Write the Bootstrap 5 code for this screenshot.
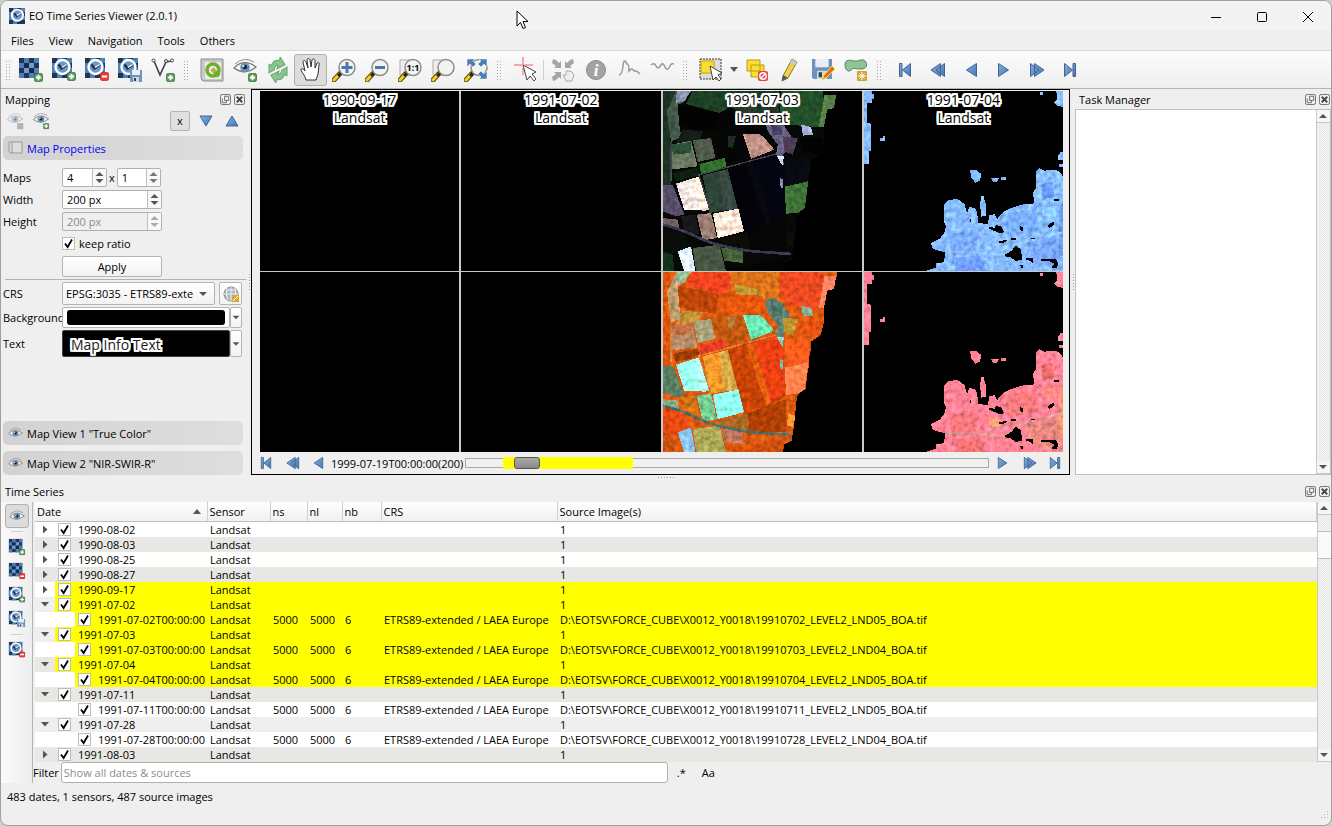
<!DOCTYPE html>
<html lang="en">
<head>
<meta charset="utf-8">
<meta name="viewport" content="width=device-width, initial-scale=1">
<title>EO Time Series Viewer (2.0.1)</title>
<link rel="stylesheet" href="https://cdn.jsdelivr.net/npm/bootstrap@5.3.0/dist/css/bootstrap.min.css">
<style>
  body { font: 11px/15px "Open Sans", "Noto Sans", sans-serif; color: #000; background: #cfcfcf; }
  button, input, select { font: inherit; color: inherit; }
  .app-window { min-height: 100vh; background: #efefef; border: 1px solid #a0a0a0; border-radius: 8px; overflow: hidden; }
  .title-bar { height: 29px; background: #f3f3f3; font-size: 11px; }
  .title-bar button { width: 46px; height: 29px; border: 0; background: none; padding: 0; }
  .menu-bar { height: 20px; gap: 15px; padding: 0 10px; }
  .menu-bar a { color: #000; text-decoration: none; }
  .tool-bar { min-height: 39px; padding-left: 0; border-top: 1px solid #dadada; border-bottom: 1px solid #b4b4b4; background: linear-gradient(#fbfbfb, #efefef); }
  .tool-bar button { width: 33px; height: 32px; border: 1px solid transparent; background: none; padding: 0; border-radius: 3px; }
  .tool-bar button.caret-btn { width: 13px; }
  .tool-bar svg, .side-tools svg { display: block; margin: auto; }
  .tool-bar .is-down, .side-tools .is-down { background: #dcdcdc; border-color: #b0b0b0; }
  .grip { width: 16px; height: 22px; flex: none; background: repeating-linear-gradient(#f5f5f5 0 2px, transparent 2px 3px), linear-gradient(90deg, transparent 5px, #a8a8a8 5px 6px, transparent 6px 8px, #a8a8a8 8px 9px, transparent 9px); }
  .grip:first-child { width: 13px; }
  .tool-sep { width: 1px; height: 20px; background: #d0d0d0; margin: 0 2px; }
  .dock-title { height: 20px; }
  .dock-title button { border: 0; background: none; padding: 0; width: 14px; height: 14px; line-height: 0; }
  .series-title { height: 22px; }
  .map-dock { width: 245px; }
  .task-dock { width: 256px; }
  .dots-v { width: 5px; display: flex; align-items: center; }
  .dots-v::before { content: ""; width: 1px; height: 17px; margin-left: 3px; background: repeating-linear-gradient(#999 0 1px, transparent 1px 3px); }
  .dots-h { height: 5px; display: flex; justify-content: center; align-items: center; }
  .dots-h::before { content: ""; width: 17px; height: 1px; background: repeating-linear-gradient(90deg, #999 0 1px, transparent 1px 3px); }
  .mini-row { gap: 6px; padding: 2px 4px 1px 0; }
  .mini { border: 1px solid transparent; background: none; padding: 0; width: 20px; height: 20px; border-radius: 2px; line-height: 0; }
  .mini.is-x { background: #e0e0e0; border-color: #b4b4b4; line-height: 18px; }
  .pull { margin-left: -2px; }
  .fold { height: 24px; background: linear-gradient(90deg, #d2d2d2, #dedede); border: 0; border-radius: 5px; width: 240px; text-align: left; padding: 0 5px; gap: 4px; }
  .fold-blue { color: #0000f5; }
  .form-rows { display: grid; grid-template-columns: 59px 1fr; row-gap: 3px; align-items: center; white-space: nowrap; }
  .form-rows.tight { row-gap: 2px; }
  .keep-row { height: 19px; }
  .thin-rule { margin: 2px 0; }
  .spin { display: flex; height: 19px; border: 1px solid #b0b0b0; border-radius: 2px; background: #fff; overflow: hidden; }
  .spin input { border: 0; outline: 0; background: none; min-width: 0; flex: 1; padding: 0 4px; height: 17px; appearance: textfield; -moz-appearance: textfield; }
  .spin input::-webkit-inner-spin-button { display: none; appearance: none; }
  .spin svg { flex: none; border-left: 1px solid #c0c0c0; background: #f8f8f8; }
  .spin.off { background: #efefef; color: #8b8b8b; }
  .w-spin-a { width: 45px; } .w-spin-b { width: 44px; } .w-spin { width: 100px; }
  .spin-pair { gap: 2px; }
  .plain-btn { border: 1px solid #b4b4b4; border-radius: 2px; background: linear-gradient(#fff, #f2f2f2); padding: 0; height: 21px; }
  .tick { appearance: none; -webkit-appearance: none; width: 13px; height: 13px; margin: 0; border: 1px solid #bcbcbc; flex: none; background: #fff url("data:image/svg+xml,%3Csvg xmlns='http://www.w3.org/2000/svg' viewBox='0 0 11 11'%3E%3Cpath d='M2 5.5 4.6 9 9 1.5' fill='none' stroke='%23000' stroke-width='1.8'/%3E%3C/svg%3E") center / 11px no-repeat; }
  .crs-select { appearance: none; -webkit-appearance: none; width: 153px; height: 23px; border: 1px solid #b4b4b4; border-radius: 2px; padding: 0 20px 0 3px; background: url("data:image/svg+xml,%3Csvg xmlns='http://www.w3.org/2000/svg' viewBox='0 0 8 4'%3E%3Cpath d='M0 0H8L4 4Z' fill='%23555'/%3E%3C/svg%3E") 136px 9px / 8px 4px no-repeat, linear-gradient(#fff, #f2f2f2); }
  .crs-btn { width: 23px; height: 23px; }
  .drop-cell { width: 12px; }
  .bg-swatch { width: 168px; height: 21px; border: 1px solid #b4b4b4; border-radius: 2px; background: #fff; padding: 2px 4px; }
  .bg-swatch span { display: block; height: 100%; background: #000; border-radius: 3px; }
  .text-swatch { width: 168px; height: 27px; border: 1px solid #38404a; border-radius: 2px; background: #000; padding: 2px 8px 0; text-align: left; }
  .halo { font-size: 14px; line-height: 18px; color: #000; text-shadow: 2px 0 #fff, -2px 0 #fff, 0 2px #fff, 0 -2px #fff, 1px 1px #fff, -1px 1px #fff, 1px -1px #fff, -1px -1px #fff, 2px 1px #fff, -2px 1px #fff, 2px -1px #fff, -2px -1px #fff, 1px 2px #fff, -1px 2px #fff, 1px -2px #fff, -1px -2px #fff, 2px 2px #fff, -2px 2px #fff, 2px -2px #fff, -2px -2px #fff; }
  .text-swatch .halo { color: #222; }
  .canvas-pane { border: 1px solid #000; padding: 1px 6px 0 8px; min-width: 0; }
  .map-grid { display: grid; grid-template-columns: repeat(4, 1fr); column-gap: 2px; row-gap: 1px; background: #c9c9c9; }
  .map-cell { background: #000; height: 180px; position: relative; overflow: hidden; }
  .map-cell svg { display: block; width: 100%; height: 100%; }
  .map-cell .halo { position: absolute; left: 0; right: 0; top: 0; text-align: center; }
  .time-nav { height: 22px; }
  .time-nav button { border: 0; background: none; padding: 0; width: 26px; line-height: 0; text-align: left; }
  .time-nav .slim { width: 19px; } .time-nav .end { width: 14px; }
  .time-track { flex: 1; height: 10px; border: 1px solid #a8a8a8; background: #f0f0f0; position: relative; margin: 0 8px 0 2px; }
  .time-track .span { position: absolute; left: 7%; width: 25%; top: -2px; height: 12px; background: #ff0; }
  .time-track input { position: absolute; left: 48px; top: -2px; width: 90%; height: 12px; margin: 0; appearance: none; -webkit-appearance: none; background: none; }
  .time-track input::-webkit-slider-thumb { -webkit-appearance: none; width: 26px; height: 12px; border: 1px solid #555; border-radius: 3px; background: linear-gradient(#aaa, #888); }
  .side-tools { width: 32px; border-right: 1px solid #b4b4b4; background: linear-gradient(90deg, #fafafa, #eee); padding: 2px 4px 0; }
  .side-tools button { width: 24px; height: 24px; border: 1px solid transparent; background: none; padding: 0; border-radius: 3px; display: block; }
  .side-sep { width: 12px; height: 1px; background: #cfcfcf; margin: 3px auto; }
  .scroll { width: 14px; flex: none; background: repeating-conic-gradient(#e4e4e4 0 25%, #f8f8f8 0 50%) 0 0 / 2px 2px; border-left: 1px solid #c8c8c8; }
  .scroll svg { display: block; background: #f6f6f6; border: solid #c8c8c8; border-width: 0 0 1px; }
  .scroll .thumb { height: 28px; background: #fafafa; border: solid #c0c0c0; border-width: 1px 0; }
  .list-pane { background: #fff; border: 1px solid #c0c0c0; }
  .tree-wrap { padding-left: 2px; }
  .tree-box { background: #fff; min-width: 0; }
  .tree { table-layout: fixed; width: 100%; border-collapse: collapse; white-space: nowrap; }
  .tree th { font-weight: 400; height: 19px; padding: 0 2px; border-right: 1px solid #d0d0d0; border-bottom: 1px solid #c0c0c0; background: linear-gradient(#fff, #f0f0f0); }
  .tree td { height: 15px; padding: 0 3px; line-height: 15px; overflow: hidden; }
  .tree td:first-child { padding: 0; }
  .row-inner { display: flex; height: 15px; }
  .branch { width: 20px; height: 15px; flex: none; }
  .branch.deep { width: 40px; background: #fff; }
  .row-main { flex: 1; display: flex; align-items: center; gap: 7px; padding-left: 3px; }
  .alt { background: #e8e7e3; } .alt2 { background: #efefef; }
  .hit td:not(:first-child), .hit .row-main { background: #ff0; }
  .filter-input { width: 607px; height: 21px; border: 1px solid #b0b0b0; border-radius: 3px; padding: 0 2px; margin-left: 2px; }
  .filter-input::placeholder { color: #8c8c8c; }
  .flat { border: 0; background: none; padding: 0; width: 27px; }
  .status { padding: 6px 2px 0 6px; }
  .pointer { position: absolute; left: 516px; top: 10px; z-index: 5; }
</style>
<script src="https://cdn.jsdelivr.net/npm/bootstrap@5.3.0/dist/js/bootstrap.bundle.min.js"></script>
</head>
<body>
<svg width="0" height="0" class="position-absolute" aria-hidden="true">
  <defs>
    <filter id="grain" x="0" y="0" width="100%" height="100%" color-interpolation-filters="sRGB">
      <feTurbulence type="fractalNoise" baseFrequency=".07" numOctaves="2" seed="4" result="n"/>
      <feColorMatrix in="n" values="1 0 0 0 .1  1 .2 0 0 0  1 0 .2 0 0  0 0 0 0 1" result="g"/>
      <feComposite in="SourceGraphic" in2="g" operator="arithmetic" k1=".7" k2=".64" result="m"/>
      <feComposite in="m" in2="SourceGraphic" operator="in"/>
    </filter>
    <linearGradient id="blue" x2="1" y2="1"><stop stop-color="#7fb0e6"/><stop offset="1" stop-color="#4478b4"/></linearGradient>
  </defs>
  <symbol id="plus" viewBox="0 0 10 10"><rect x=".5" y=".5" width="9" height="9" rx="2" fill="#5a9a5a" stroke="#3f7a42"/><path d="M5 2V8M2 5H8" stroke="#fff" stroke-width="2"/></symbol>
  <symbol id="minus" viewBox="0 0 10 10"><rect x=".5" y=".5" width="9" height="9" rx="2" fill="#ef3a32" stroke="#d9302a"/><path d="M2 5H8" stroke="#fff" stroke-width="2.4"/></symbol>
  <symbol id="disk" viewBox="0 0 12 12"><path d="M0 0H12V12H1L0 11Z" fill="#6f93bd"/><path d="M2 0H10V5H2Z" fill="#e8eef5"/><path d="M3 7H9V12H3Z" fill="#d4d8dc"/><path d="M4 8H6V11H4Z" fill="#345"/></symbol>
  <symbol id="mosaic" viewBox="0 0 20 20"><path d="M0 0H20V20H0Z" fill="#1f3657"/><path d="M5 0H10V5H15V0H20V5H15V10H20V15H15V20H10V15H5V20H0V15H5V10H0V5H5Z" fill="#4f7fb5"/><path d="M10 5H15V10H10ZM5 10H10V15H5Z" fill="#6f9dd0"/><path d="M5 5H10V10H5ZM10 10H15V15H10Z" fill="#172a47"/></symbol>
  <symbol id="clock" viewBox="0 0 20 20"><path d="M0 0H20V20H0Z" fill="#1f3657"/><path d="M0 5H5V0H10V20H5V15H0ZM15 0H20V5H15ZM15 10H20V15H15Z" fill="#4f7fb5"/><circle cx="10.500" cy="9" r="7" fill="#6b97c9" stroke="#fff" stroke-width="2.400"/><path d="M6.500 6.500 9.500 10.500 14.500 7" fill="none" stroke="#1b2c4a" stroke-width="2.200"/><path d="M10 9.500 14.500 6.500" stroke="#fff" stroke-width="1.500"/></symbol>
  <symbol id="eye" viewBox="0 0 24 18"><path d="M1 10Q11 0 23 9Q12 18 1 10Z" fill="#f4f4f4" stroke="#777" stroke-width="1.200"/><circle cx="12" cy="9.500" r="4.800" fill="#6a93b8"/><circle cx="12" cy="9" r="2.200" fill="#152538"/><circle cx="10.500" cy="8" r="1" fill="#fff"/><path d="M2 6Q11 -2 21 4" fill="none" stroke="#8f8f8f"/></symbol>
  <symbol id="lens" viewBox="0 0 24 24"><path d="M2 22 8 15.500" stroke="#5b4a00" stroke-width="5" stroke-linecap="round"/><path d="M2 22 7 16.500" stroke="#f4cf2c" stroke-width="3" stroke-linecap="round"/><path d="M6 18 9 15" stroke="#222" stroke-width="3"/><circle cx="15" cy="9.500" r="8" fill="#f3f3f0" stroke="#8b8d88" stroke-width="1.500"/></symbol>
  <symbol id="prev" viewBox="0 0 14 16"><path d="M12.500 1.500V14.500L2.500 8Z" fill="url(#blue)" stroke="#44648c"/></symbol>
  <symbol id="next" viewBox="0 0 14 16"><path d="M1.500 1.500V14.500L11.500 8Z" fill="url(#blue)" stroke="#44648c"/></symbol>
  <symbol id="rew" viewBox="0 0 16 16"><path d="M10.500 1.500V14.500L1 8ZM14.500 1.500V14.500L6 8Z" fill="url(#blue)" stroke="#44648c"/></symbol>
  <symbol id="fwd" viewBox="0 0 16 16"><path d="M1.500 1.500V14.500L10 8ZM5.500 1.500V14.500L15 8Z" fill="url(#blue)" stroke="#44648c"/></symbol>
  <symbol id="first" viewBox="0 0 14 16"><path d="M1.500 1.500H4V14.500H1.500ZM12.500 1.500V14.500L4.500 8Z" fill="url(#blue)" stroke="#44648c"/></symbol>
  <symbol id="last" viewBox="0 0 14 16"><path d="M10 1.500H12.500V14.500H10ZM1.500 1.500V14.500L9.500 8Z" fill="url(#blue)" stroke="#44648c"/></symbol>
  <symbol id="updown" viewBox="0 0 13 17"><path d="M2.500 7H10.500L6.500 3ZM2.500 10H10.500L6.500 14Z"/></symbol>
  <symbol id="drop" viewBox="0 0 12 20"><path d="M2 8H10L6 12Z" fill="#555"/></symbol>
  <symbol id="float" viewBox="0 0 12 12"><rect x=".5" y=".5" width="11" height="11" rx="2" fill="none" stroke="#666"/><path d="M5 2.500H9.500V7H5ZM2.500 5V9.500H7V7" fill="none" stroke="#666"/></symbol>
  <symbol id="close" viewBox="0 0 12 12"><rect x=".5" y=".5" width="11" height="11" rx="2" fill="none" stroke="#666"/><path d="M3 3 9 9M9 3 3 9" stroke="#444" stroke-width="2"/></symbol>
  <symbol id="mosaic-plus" viewBox="0 0 26 26"><use href="#mosaic" x="1" y="1" width="20" height="20"/><use href="#plus" x="16" y="16" width="9" height="9"/></symbol>
  <symbol id="mosaic-minus" viewBox="0 0 26 26"><use href="#mosaic" x="1" y="1" width="20" height="20"/><use href="#minus" x="16" y="16" width="9" height="9"/></symbol>
  <symbol id="clock-plus" viewBox="0 0 26 26"><use href="#clock" x="1" y="1" width="20" height="20"/><use href="#plus" x="16" y="15" width="9" height="9"/></symbol>
  <symbol id="clock-minus" viewBox="0 0 26 26"><use href="#clock" x="1" y="1" width="20" height="20"/><use href="#minus" x="16" y="15" width="9" height="9"/></symbol>
  <symbol id="clock-disk" viewBox="0 0 26 26"><use href="#clock" x="1" y="1" width="20" height="20"/><use href="#disk" x="13" y="13" width="12" height="12"/></symbol>
  <symbol id="eye-plus" viewBox="0 0 26 26"><use href="#eye" x="1" y="1" width="24" height="18"/><use href="#plus" x="16" y="16" width="9" height="9"/></symbol>
</svg>

<svg class="pointer" width="13" height="20" viewBox="0 0 13 20" aria-hidden="true"><path d="M1 1V16L4.500 12.500 7 18.500 9.500 17.500 7 11.500H12Z" fill="#fff" stroke="#000"/></svg>

<div class="app-window d-flex flex-column">
  <header class="title-bar d-flex align-items-center ps-2">
    <svg width="16" height="16"><use href="#clock"/></svg>
    <span class="ms-1 me-auto">EO Time Series Viewer (2.0.1)</span>
    <button aria-label="Minimize"><svg width="12" height="12"><path d="M1 6.500H11" stroke="#000"/></svg></button>
    <button aria-label="Maximize"><svg width="12" height="12"><rect x="1.500" y="1.500" width="9" height="9" rx="1" fill="none" stroke="#000"/></svg></button>
    <button aria-label="Close"><svg width="12" height="12"><path d="M1 1 11 11M11 1 1 11" stroke="#000"/></svg></button>
  </header>
  <nav class="menu-bar d-flex align-items-center">
    <a href="#">Files</a><a href="#">View</a><a href="#">Navigation</a><a href="#">Tools</a><a href="#">Others</a>
  </nav>

  <div class="tool-bar d-flex align-items-center" role="toolbar" aria-label="Main tools">
    <span class="grip"></span>
    <button aria-label="Add images"><svg width="26" height="26"><use href="#mosaic-plus"/></svg></button>
    <button aria-label="Add time series"><svg width="26" height="26"><use href="#clock-plus"/></svg></button>
    <button aria-label="Clear time series"><svg width="26" height="26"><use href="#clock-minus"/></svg></button>
    <button aria-label="Save time series"><svg width="26" height="26"><use href="#clock-disk"/></svg></button>
    <button aria-label="Add vector"><svg width="26" height="26"><path d="M4 4 10 18 16 5 22 4" fill="none" stroke="#3b4250" stroke-width="1.600"/><g fill="#fff" stroke="#3b4250"><circle cx="3.500" cy="3.500" r="1.500"/><circle cx="16" cy="4" r="1.500"/><circle cx="22" cy="3.500" r="1.500"/></g><use href="#plus" x="16" y="16" width="9" height="9"/></svg></button>
    <span class="grip"></span>
    <button aria-label="Load QGIS project"><svg width="26" height="26"><path d="M2 2H24V24H5Q2 24 2 20Z" fill="#c9c9c9" stroke="#8c8c8c"/><path d="M6 5H22V22H6Z" fill="#e9ebe4"/><circle cx="14" cy="13" r="6" fill="none" stroke="#6fae2e" stroke-width="3.500"/><path d="M13 12 20 19" stroke="#6fae2e" stroke-width="4"/><path d="M13 12 16 15" stroke="#e8a32e" stroke-width="3"/></svg></button>
    <button aria-label="Add map view"><svg width="26" height="26"><use href="#eye-plus"/></svg></button>
    <button aria-label="Refresh"><svg width="26" height="26" fill="#8cc490" stroke="#6aa870"><path d="M2 13 5 5 7 7Q11 2 16 5L18 2 20 11 11 12 13 9Q10 8 8 12Z" transform="rotate(-20 11 9)"/><path d="M24 13 21 21 19 19Q15 24 10 21L8 24 6 15 15 14 13 17Q16 18 18 14Z" transform="rotate(-20 15 17)"/></svg></button>
    <button class="is-down" aria-label="Pan"><svg width="24" height="26"><path d="M7 23C6 18 3 16 2 13C2 11 4 11 6 14L4 5C4 3 6 3 7 5L9 11 8 3C8 1 11 1 11 3L12 10 13 3C14 1 16 2 16 4L16 11 18 6C19 5 21 6 20 8L19 17 17 23Z" fill="#fff" stroke="#333"/></svg></button>
    <button aria-label="Zoom in"><svg width="26" height="26"><use href="#lens" x="1" y="1" width="24" height="24"/><path d="M16 5V16M10.500 10.500H21.500" stroke="#4877b3" stroke-width="3"/></svg></button>
    <button aria-label="Zoom out"><svg width="26" height="26"><use href="#lens" x="1" y="1" width="24" height="24"/><path d="M11 10.500H21" stroke="#4877b3" stroke-width="3"/></svg></button>
    <button aria-label="Zoom to native resolution"><svg width="26" height="26"><path d="M3 3H18V18H3Z" fill="#eee" stroke="#aaa"/><use href="#lens" x="1" y="1" width="24" height="24"/><text x="16" y="14" font-size="9" font-weight="700" text-anchor="middle">1:1</text></svg></button>
    <button aria-label="Zoom to layer"><svg width="26" height="26"><path d="M3 3H18V18H3Z" fill="#eee" stroke="#aaa"/><use href="#lens" x="1" y="1" width="24" height="24"/></svg></button>
    <button aria-label="Zoom full"><svg width="26" height="26"><use href="#lens" x="1" y="1" width="24" height="24"/><path d="M4 2H12L10 4 13 7 10 10 7 7 4 10ZM24 2H16L18 4 15 7 18 10 21 7 24 10ZM24 22H16L18 20 15 17 18 14 21 17 24 14Z" fill="#4d7cb6" stroke="#fff" stroke-width=".5"/></svg></button>
    <span class="grip"></span>
    <button aria-label="Identify cursor"><svg width="26" height="26"><path d="M2 8H22M11 0V18" stroke="#f55" stroke-dasharray="8 3"/><path d="M11 8 15 23 18 19 22 24 24 22 20 17 24 15Z" fill="#fff" stroke="#444"/></svg></button>
    <span class="tool-sep"></span>
    <button aria-label="Centre map"><svg width="26" height="26" fill="#a5a5a5"><path d="M3 2 6 3 9 6 11 4V11H4L6 9 2 6Z"/><path d="M23 2 20 3 17 6 15 4V11H22L20 9 24 6ZM3 24 6 23 9 20 11 22V15H4L6 17 2 20Z"/><path d="M16 24 13 18 16 18V14L19 14 22 15 24 18 22 24Z" fill="#eee" stroke="#aaa"/></svg></button>
    <button aria-label="Information"><svg width="26" height="26"><circle cx="13" cy="13" r="9.500" fill="#a3a3a3" stroke="#888"/><text x="13" y="19" font-size="17" font-style="italic" font-weight="700" font-family="Liberation Serif, serif" text-anchor="middle" fill="#fff">i</text></svg></button>
    <button aria-label="Spectral profile"><svg width="26" height="26"><path d="M3 18Q6 18 7 9T11 7Q13 7 13 14Q16 10 18 14Q20 13 24 17" fill="none" stroke="#999" stroke-width="1.500"/></svg></button>
    <button aria-label="Temporal profile"><svg width="26" height="26"><path d="M2 8Q5 5 7 9T12 8Q14 5 16 10T21 9Q22 6 25 7" fill="none" stroke="#999" stroke-width="1.500"/></svg></button>
    <span class="grip"></span>
    <button aria-label="Select features"><svg width="26" height="26"><path d="M2 2H23V22H2Z" fill="#ddd" stroke="#333" stroke-dasharray="2 1"/><path d="M3 4H16V16H3Z" fill="#fbdd35" stroke="#c9a400"/><path d="M12 9 15 23 18 20 21 24 23 22 20 18 24 16Z" fill="#fff" stroke="#444"/></svg></button>
    <button class="caret-btn" aria-label="Selection modes"><svg width="8" height="5"><path d="M0 0H8L4 5Z" fill="#555"/></svg></button>
    <button aria-label="Deselect"><svg width="26" height="26"><path d="M3 3H16V14H3ZM7 8H20V20H7Z" fill="#fbdd35" stroke="#b89b1c"/><rect x="14" y="14" width="10" height="10" rx="2" fill="#e04848"/><circle cx="19" cy="19" r="3.200" fill="none" stroke="#fff" stroke-width="1.400"/><path d="M17 21 21 17" stroke="#fff" stroke-width="1.400"/></svg></button>
    <button aria-label="Edit"><svg width="26" height="26"><path d="M6 19 15 2 20 5 11 21 5 24Z" fill="#ecd04b" stroke="#85763a"/><path d="M6 18 11 21 5 24Z" fill="#555"/><path d="M15 2 20 5 18 8 13 6Z" fill="#c8c8c8"/></svg></button>
    <button aria-label="Save edits"><svg width="26" height="26"><use href="#disk" x="2" y="2" width="20" height="20"/><path d="M12 23 14 18 22 9 25 12 17 20Z" fill="#e8672b" stroke="#f5e62a"/></svg></button>
    <button aria-label="Add feature"><svg width="26" height="26"><path d="M2 8C2 2 7 3 11 4S19 1 22 4 24 12 18 12 11 10 8 13 2 12 2 8Z" fill="#8fc596" stroke="#4f8558"/><rect x="14" y="14" width="10" height="10" rx="1" fill="#d1a52b"/><path d="M19 15V23M15 19H23M16.500 16.500 21.500 21.500M21.500 16.500 16.500 21.500" stroke="#fff"/></svg></button>
    <span class="grip"></span>
    <button aria-label="First date"><svg width="14" height="16"><use href="#first"/></svg></button>
    <button aria-label="Fast backward"><svg width="16" height="16"><use href="#rew"/></svg></button>
    <button aria-label="Previous date"><svg width="14" height="16"><use href="#prev"/></svg></button>
    <button aria-label="Next date"><svg width="14" height="16"><use href="#next"/></svg></button>
    <button aria-label="Fast forward"><svg width="16" height="16"><use href="#fwd"/></svg></button>
    <button aria-label="Last date"><svg width="14" height="16"><use href="#last"/></svg></button>
  </div>

  <main class="d-flex">
    <section class="map-dock d-flex flex-column ps-1 flex-shrink-0" aria-label="Mapping">
      <div class="dock-title d-flex align-items-center">
        <span class="me-auto">Mapping</span>
        <button aria-label="Float"><svg width="11" height="11"><use href="#float"/></svg></button>
        <button aria-label="Close"><svg width="11" height="11"><use href="#close"/></svg></button>
      </div>
      <div class="mini-row d-flex align-items-center">
        <button class="mini" aria-label="Remove map view"><svg width="18" height="18" viewBox="0 0 26 26" opacity=".5"><use href="#eye" x="1" y="1" width="24" height="18"/><rect x="16" y="16" width="9" height="9" fill="#777"/></svg></button>
        <button class="mini me-auto" aria-label="Add map view"><svg width="18" height="18"><use href="#eye-plus"/></svg></button>
        <button class="mini is-x">x</button>
        <button class="mini" aria-label="Move down"><svg width="16" height="14"><path d="M2 2H14L8 12Z" fill="url(#blue)" stroke="#44648c"/></svg></button>
        <button class="mini" aria-label="Move up"><svg width="16" height="14"><path d="M2 12H14L8 2Z" fill="url(#blue)" stroke="#44648c"/></svg></button>
      </div>
      <button class="fold fold-blue pull d-flex align-items-center mt-1 mb-2 flex-shrink-0"><svg width="15" height="14"><path d="M1 1H14V12H3Q1 12 1 9Z" fill="#ddd" stroke="#999"/><path d="M4 1V12" stroke="#999"/></svg>Map Properties</button>
      <div class="form-rows pull">
        <label for="cols">Maps</label>
        <div class="spin-pair d-flex align-items-center">
          <span class="spin w-spin-a"><input id="cols" type="number" value="4"><svg width="14" height="17" fill="#555"><use href="#updown"/></svg></span>
          <label for="rows">x</label>
          <span class="spin w-spin-b"><input id="rows" type="number" value="1"><svg width="14" height="17" fill="#777"><use href="#updown"/></svg></span>
        </div>
        <label for="mw">Width</label>
        <span class="spin w-spin"><input id="mw" value="200 px"><svg width="14" height="17" fill="#555"><use href="#updown"/></svg></span>
        <label for="mh">Height</label>
        <span class="spin w-spin off"><input id="mh" value="200 px" disabled><svg width="14" height="17" fill="#aaa"><use href="#updown"/></svg></span>
        <span></span>
        <label class="keep-row d-flex align-items-center gap-1"><input class="tick" type="checkbox" checked>keep ratio</label>
        <span></span>
        <button class="plain-btn w-spin">Apply</button>
      </div>
      <hr class="thin-rule pull">
      <div class="form-rows tight pull">
        <label for="crs">CRS</label>
        <div class="d-flex gap-1"><select id="crs" class="crs-select"><option>EPSG:3035 - ETRS89-exte</option></select><button class="plain-btn crs-btn" aria-label="Select CRS"><svg class="d-block mx-auto" width="16" height="16"><circle cx="8" cy="8" r="7" fill="#a9b8c8" stroke="#888"/><path d="M1 8H15M8 1V15M3 4H13M4 2Q2 8 5 14M12 2Q14 8 11 14" fill="none" stroke="#eee"/><path d="M9 9H16V16H9Z" fill="#d9ab2a"/><path d="M10 15 15 10" stroke="#fff"/></svg></button></div>
        <label for="bgc">Background</label>
        <div class="d-flex"><button id="bgc" class="bg-swatch"><span></span></button><button class="plain-btn drop-cell" aria-label="Background options"><svg class="d-block" width="10" height="19"><use href="#drop"/></svg></button></div>
        <label for="txt">Text</label>
        <div class="d-flex"><button id="txt" class="text-swatch"><span class="halo">Map Info Text</span></button><button class="plain-btn drop-cell h-auto" aria-label="Text options"><svg class="d-block" width="10" height="24"><use href="#drop"/></svg></button></div>
      </div>
      <div class="mt-auto pull d-flex flex-column" style="gap:6px">
        <button class="fold d-flex align-items-center"><svg width="15" height="12"><use href="#eye"/></svg>Map View 1 "True Color"</button>
        <button class="fold d-flex align-items-center"><svg width="15" height="12"><use href="#eye"/></svg>Map View 2 "NIR-SWIR-R"</button>
      </div>
    </section>
    <div class="dots-v"></div>

    <section class="canvas-pane flex-grow-1" aria-label="Maps">
      <div class="map-grid">
        <div class="map-cell"><div class="halo">1990-09-17<br>Landsat</div></div>
        <div class="map-cell"><div class="halo">1991-07-02<br>Landsat</div></div>
        <div class="map-cell"><svg data-scene="fields" data-band="1" viewBox="21 9 597 540" preserveAspectRatio="none"></svg><div class="halo">1991-07-03<br>Landsat</div></div>
        <div class="map-cell"><svg data-scene="clouds" data-band="1" viewBox="9 6 597 540" preserveAspectRatio="none"></svg><div class="halo">1991-07-04<br>Landsat</div></div>
        <div class="map-cell"></div>
        <div class="map-cell"></div>
        <div class="map-cell"><svg data-scene="fields" data-band="2" viewBox="21 9 597 540" preserveAspectRatio="none"></svg></div>
        <div class="map-cell"><svg data-scene="clouds" data-band="2" viewBox="9 6 597 540" preserveAspectRatio="none"></svg></div>
      </div>
      <div class="time-nav d-flex align-items-center">
        <button aria-label="First date"><svg width="12" height="14"><use href="#first"/></svg></button>
        <button aria-label="Fast backward"><svg width="14" height="14"><use href="#rew"/></svg></button>
        <button class="slim" aria-label="Previous date"><svg width="12" height="14"><use href="#prev"/></svg></button>
        <label for="time">1999-07-19T00:00:00(200)</label>
        <div class="time-track"><span class="span"></span><input id="time" type="range" min="0" max="100" value="0"></div>
        <button aria-label="Next date"><svg width="12" height="14"><use href="#next"/></svg></button>
        <button aria-label="Fast forward"><svg width="14" height="14"><use href="#fwd"/></svg></button>
        <button class="end" aria-label="Last date"><svg width="12" height="14"><use href="#last"/></svg></button>
      </div>
    </section>
    <div class="dots-v"></div>

    <section class="task-dock d-flex flex-column flex-shrink-0" aria-label="Task Manager">
      <div class="dock-title d-flex align-items-center ps-1">
        <span class="me-auto">Task Manager</span>
        <button aria-label="Float"><svg width="11" height="11"><use href="#float"/></svg></button>
        <button aria-label="Close"><svg width="11" height="11"><use href="#close"/></svg></button>
      </div>
      <div class="list-pane flex-grow-1 d-flex justify-content-end">
        <div class="scroll d-flex flex-column justify-content-between">
          <svg width="13" height="13"><path d="M2 8H10L6 4Z" fill="#555"/></svg>
          <svg width="13" height="13"><path d="M2 4H10L6 8Z" fill="#555"/></svg>
        </div>
      </div>
    </section>
  </main>

  <div class="dots-h"></div>
  <section aria-label="Time Series">
    <div class="dock-title series-title d-flex align-items-center ps-1">
      <span class="me-auto">Time Series</span>
      <button aria-label="Float"><svg width="11" height="11"><use href="#float"/></svg></button>
      <button aria-label="Close"><svg width="11" height="11"><use href="#close"/></svg></button>
    </div>
    <div class="d-flex">
      <div class="side-tools flex-shrink-0">
        <button class="is-down" aria-label="Follow visible dates"><svg width="16" height="12"><use href="#eye"/></svg></button>
        <div class="side-sep"></div>
        <button aria-label="Add images"><svg width="18" height="18"><use href="#mosaic-plus"/></svg></button>
        <button aria-label="Remove images"><svg width="18" height="18"><use href="#mosaic-minus"/></svg></button>
        <button aria-label="Load time series"><svg width="18" height="18"><use href="#clock-plus"/></svg></button>
        <button aria-label="Save time series"><svg width="18" height="18"><use href="#clock-disk"/></svg></button>
        <div class="side-sep"></div>
        <button aria-label="Clear time series"><svg width="18" height="18"><use href="#clock-minus"/></svg></button>
      </div>
      <div class="flex-grow-1 overflow-hidden">
        <div class="tree-wrap d-flex">
          <div class="tree-box flex-grow-1">
            <table class="tree">
              <colgroup><col style="width:172px"><col style="width:63px"><col style="width:37px"><col style="width:35px"><col style="width:39px"><col style="width:176px"><col></colgroup>
              <thead><tr><th><span class="d-flex align-items-center justify-content-between pe-1">Date<svg width="8" height="5"><path d="M0 5H8L4 0Z" fill="#555"/></svg></span></th><th>Sensor</th><th>ns</th><th>nl</th><th>nb</th><th>CRS</th><th>Source Image(s)</th></tr></thead>
              <tbody id="dates"></tbody>
            </table>
          </div>
          <div class="scroll d-flex flex-column">
            <svg width="13" height="13" class="mb-3"><path d="M2 8H10L6 4Z" fill="#555"/></svg>
            <div class="thumb"></div>
            <svg width="13" height="13" class="mt-auto"><path d="M2 4H10L6 8Z" fill="#555"/></svg>
          </div>
        </div>
        <div class="d-flex align-items-center">
          <label for="filter">Filter</label>
          <input id="filter" class="filter-input" placeholder="Show all dates &amp; sources">
          <button class="flat">.*</button><button class="flat">Aa</button>
        </div>
      </div>
    </div>
  </section>
  <footer class="status d-flex justify-content-between flex-grow-1"><span>483 dates, 1 sensors, 487 source images</span><svg class="mt-auto mb-1" width="10" height="10" fill="#b0b0b0"><path d="M8 0H9V1H8ZM5 3H6V4H5ZM8 3H9V4H8ZM2 6H3V7H2ZM5 6H6V7H5ZM8 6H9V7H8Z"/></svg></footer>
</div>

<script>
  // date, row shade, highlighted, image file (only for opened dates)
  const dates = [
    ['1990-08-02', ''], ['1990-08-03', 'alt'], ['1990-08-25', ''], ['1990-08-27', 'alt'],
    ['1990-09-17', '', true],
    ['1991-07-02', 'alt2', true, '19910702_LEVEL2_LND05_BOA.tif'],
    ['1991-07-03', 'alt2', true, '19910703_LEVEL2_LND04_BOA.tif'],
    ['1991-07-04', 'alt', true, '19910704_LEVEL2_LND05_BOA.tif'],
    ['1991-07-11', 'alt', false, '19910711_LEVEL2_LND05_BOA.tif'],
    ['1991-07-28', 'alt2', false, '19910728_LEVEL2_LND04_BOA.tif'],
    ['1991-08-03', 'alt']
  ];
  const closed = '<svg width="20" height="15"><path d="M8 3.500V11.500L12.500 7.500Z" fill="#555"/></svg>';
  const opened = '<svg width="20" height="15"><path d="M6 5H14L10 9.500Z" fill="#555"/></svg>';
  document.getElementById('dates').innerHTML = dates.map(([d, shade, hit, file]) => {
    const h = hit ? ' hit' : '';
    let html = `<tr class="${shade}${h}"><td><div class="row-inner"><span class="branch d-flex">${file ? opened : closed}</span><label class="row-main"><input class="tick" type="checkbox" checked>${d}</label></div></td><td>Landsat</td><td></td><td></td><td></td><td></td><td>1</td></tr>`;
    if (file) html += `<tr class="${h}"><td><div class="row-inner"><span class="branch deep"></span><label class="row-main"><input class="tick" type="checkbox" checked>${d}T00:00:00</label></div></td><td>Landsat</td><td>5000</td><td>5000</td><td>6</td><td>ETRS89-extended / LAEA Europe</td><td>D:\\EOTSV\\FORCE_CUBE\\X0012_Y0018\\${file}</td></tr>`;
    return html;
  }).join('');

  // field outlines with their true colour and NIR-SWIR-R colour
  const edge = '21,9 543,9 541,24 536,38 533,60 513,65 509,90 503,118 503,160 497,185 492,200 465,218 463,245 458,270 458,290 453,318 448,360 425,375 420,400 417,440 413,475 406,515 385,525 380,549 21,549';
  const fields = [
    [edge, '#060806', '#cf5410'],
    ['21,9 60,9 40,100 45,290 21,290', '#1a3021', '#d0500c'],
    ['60,9 105,9 80,45 66,50 75,150 45,160 33,70', '#405248', '#b39468'],
    ['62,9 105,9 85,40 60,44', '#8790a8', '#95b890'],
    ['110,9 220,9 225,55 190,75 90,48', '#1b3d22', '#e5401c'],
    ['220,9 370,9 370,100 320,90 225,60', '#1b3322', '#cf6c18'],
    ['235,45 300,60 330,85 240,75', '#243828', '#b89030'],
    ['375,9 500,9 505,60 495,118 400,110 370,75', '#204c27', '#e14620'],
    ['505,20 540,22 533,60 513,65 503,118 488,118', '#527844', '#f47e5c'],
    ['65,50 190,75 180,135 70,115', '#020302', '#b34208'],
    ['190,75 320,80 325,130 180,137', '#040504', '#da520e'],
    ['80,125 140,130 130,155 60,165', '#151c1a', '#ba8c34'],
    ['160,145 260,140 285,213 200,225', '#050505', '#b85410'],
    ['215,145 240,145 230,180 215,175', '#1e2a20', '#a87838'],
    ['325,100 345,85 375,100 405,145 400,180 380,200 383,230 355,230 365,170 335,130', '#625c80', '#587c70'],
    ['345,110 370,105 380,140 350,140', '#403c5c', '#466a60'],
    ['355,205 383,205 380,232 357,230', '#c8d0f4', '#85c4bc'],
    ['435,110 465,117 470,140 440,143', '#a0acd4', '#85aa90'],
    ['380,145 425,150 410,200 385,190', '#4c3a50', '#b8902c'],
    ['260,138 310,138 325,150 355,185 285,213', '#b88a80', '#67dcac'],
    ['430,150 500,150 492,200 440,190', '#020202', '#df4f10'],
    ['385,210 463,215 458,270 458,280 390,292', '#080a12', '#f9581a'],
    ['385,296 456,280 446,360 425,375 390,377', '#3a6c34', '#ff7c4a'],
    ['45,170 105,158 125,235 45,245', '#65705a', '#ac8360'],
    ['48,170 105,162 105,195 50,200', '#2a4c34', '#bb6c40'],
    ['110,157 165,150 178,210 125,222', '#4c5648', '#a09a74'],
    ['130,228 205,210 212,235 135,260', '#2e6c2a', '#dc3a24'],
    ['50,255 125,238 130,262 60,280', '#0c1f10', '#943c06'],
    ['60,287 130,265 160,365 85,367', '#e8dcd8', '#96ffe8'],
    ['110,272 130,265 160,365 138,370', '#fbe8d4', '#aefff0'],
    ['140,262 215,243 245,362 160,374', '#2c4034', '#eb9328'],
    ['190,250 215,243 245,362 205,368', '#34463f', '#cda046'],
    ['170,377 248,362 264,430 185,450', '#f4dccc', '#88ffe9'],
    ['122,380 165,375 183,450 140,457', '#94786e', '#70c48c'],
    ['215,240 350,198 382,240 388,380 345,405 265,432', '#030309', '#bd4006'],
    ['285,225 360,200 382,240 388,370 345,405', '#050510', '#df3d12'],
    ['270,228 290,222 345,400 330,410', '#07080f', '#d75a0c'],
    ['21,290 50,290 85,380 60,385 21,370', '#524a64', '#55785c'],
    ['75,385 118,380 130,440 85,430', '#17171a', '#c56c12'],
    ['21,390 65,395 70,420 21,410', '#6c5860', '#80a080'],
    ['265,435 390,390 390,490 280,490', '#040604', '#a63c04'],
    ['185,455 275,435 280,490 200,475', '#0a0c08', '#a06122'],
    ['21,415 85,430 98,480 40,500 21,490', '#090d0a', '#dc4611'],
    ['110,480 190,470 210,549 120,549', '#445240', '#a4a052'],
    ['195,478 262,490 260,525 205,518', '#425e36', '#b57158'],
    ['65,490 105,475 118,549 85,549', '#dce8fc', '#87bbe6'],
    ['21,490 50,500 55,549 21,549', '#12301a', '#c04c10'],
    ['215,545 400,503 385,525 380,549', '#040404', '#c54c0c'],
    ['397,435 418,440 410,475 392,468', '#0c0c0c', '#f09232'],
    ['370,270 382,275 380,300 374,300', '#8488b0', '#75b8a0']
  ];
  const cloud = ['9,6 33,6 33,15 39,15 39,30 33,30 33,42 18,42 18,100 30,105 30,185 24,185 24,225 9,225', '57,147 66,147 66,141 72,141 72,156 57,156', '537,9 546,9 546,18 537,18', '585,6 606,6 606,54 588,50 579,40 588,32', '591,200 597,190 606,190 606,213 591,213', '594,225 606,225 606,234 594,234', '327,243 345,243 360,255 357,275 342,281 330,265', '390,267 414,267 408,279 396,279', '420,263 435,263 435,272 420,272', '360,322 367,322 375,350 375,380 360,383 357,345', '249,345 262,333 290,330 310,345 318,372 325,353 345,360 350,385 352,402 380,405 385,378 400,376 408,390 425,370 450,357 480,347 520,343 515,310 523,300 523,250 535,238 548,245 575,243 590,245 606,262 606,546 195,546 225,535 225,522 249,520 252,490 215,480 210,462 235,450 250,430 255,410 249,400'];
  const shades = [
    ['265,440 330,420 350,440 345,485 270,485', '#74a4fb', '#f27278'],
    ['285,505 360,500 375,546 280,546', '#6c98fc', '#ea6e70'],
    ['430,375 520,360 530,430 440,440', '#74a6fb', '#ee7478'],
    ['540,285 575,280 580,325 545,330', '#6898f6', '#e86a6a'],
    ['545,355 590,350 585,385 545,380', '#84c0ff', '#f08078'],
    ['385,443 410,443 420,470 385,466', '#84b8ff', '#ffa070'],
    ['490,465 600,440 600,546 510,520', '#74a0f6', '#dc8078'],
    ['592,370 606,330 606,500 592,500', '#6498e0', '#f09068']
  ];
  const holes = ['385,413 400,417 405,408 422,413 428,430 415,432 385,420', '413,458 437,452 435,460 415,462', '430,498 452,485 463,470 480,482 482,512 462,516 450,505 430,502', '448,448 463,448 463,454 448,454', '477,412 486,416 484,427 477,422', '493,507 515,508 515,524 508,515 493,513', '540,510 585,510 592,525 585,538 568,535 580,525 565,517 540,516', '561,407 578,398 578,406 563,420', '579,330 594,330 594,336 579,336', '327,390 331,390 331,400 327,400', '510,448 520,446 520,451 510,451', '477,527 483,527 487,536 480,536'];
  const poly = (p, f) => `<polygon points="${p}" fill="${f}"/>`;
  document.querySelectorAll('svg[data-scene]').forEach(svg => {
    const b = +svg.dataset.band;
    let s;
    if (svg.dataset.scene === 'fields') {
      s = fields.map(r => poly(r[0], r[b])).join('') +
        `<path d="M21 410Q80 425 130 450T290 490L405 498" fill="none" stroke="${b === 1 ? '#3a3650' : '#4d6c60'}" stroke-width="8"/>` +
        `<path d="M125 262 285 218 360 198M45 160 45 280M130 265 165 375" fill="none" stroke="${b === 1 ? '#3c4048' : '#c87838'}" stroke-width="4"/>`;
      s = `<g filter="url(#grain)">${s}</g>`;
    } else {
      s = cloud.map(p => poly(p, b === 1 ? '#80b2ff' : '#fb7c8e')).join('') + shades.map(r => poly(r[0], r[b])).join('') +
        `<path d="M252 488Q350 492 440 498M385 480Q500 460 603 430" fill="none" stroke="${b === 1 ? '#90bcf0' : '#c99888'}" stroke-width="5"/>`;
      s = `<g filter="url(#grain)">${s}</g>` + holes.map(p => poly(p, '#000')).join('');
    }
    svg.setAttribute('shape-rendering', 'crispEdges');
    svg.innerHTML = s;
  });
</script>
</body>
</html>
